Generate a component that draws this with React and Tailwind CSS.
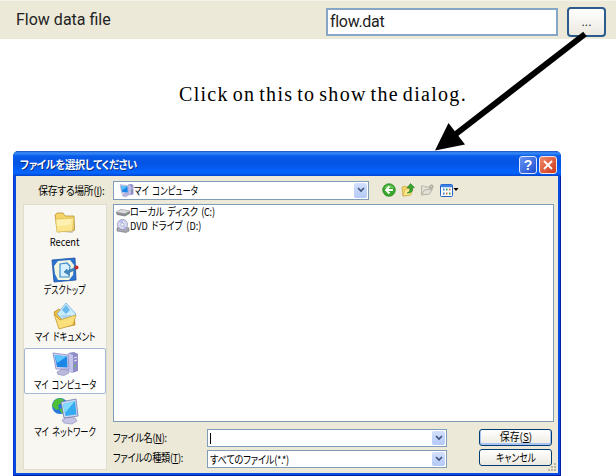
import React from "react";

const ui = "font-['Liberation_Sans','Noto_Sans_CJK_JP',sans-serif]";
const jp = "font-['Noto_Sans_CJK_JP',sans-serif] [font-feature-settings:'palt'] whitespace-nowrap";
const narrow = "inline-block origin-left text-[11px] ";

function Monitor({ className }) {
  return (
    <svg viewBox="0 0 28 28" className={className}>
      <path d="M17 3l6-1 4 2v17l-6 2-5-3z" fill="#8f8cc8" />
      <path d="M17 3l5 2v18l-6-3z" fill="#c4c3ea" />
      <path d="M23 8l3-1M23 11l3-1" stroke="#e9e9fb" />
      <circle cx="24" cy="16" r="1" fill="#5cc24a" />
      <path d="M6 22l5-3 6 1 1 3-5 2.500-6-1z" fill="#b9b8dc" stroke="#8987b8" strokeWidth=".6" />
      <path d="M2 3l15 2 1 14-13 0z" fill="#d4d5f2" stroke="#8785c0" strokeWidth=".8" />
      <path d="M3.500 5l12.500 1.500.5 11L6 17z" fill="#1c86e6" />
      <path d="M3.500 5l12.500 1.500L6 13z" fill="#5cc4fa" />
    </svg>
  );
}

function Folder() {
  return (
    <svg viewBox="0 0 24 24" className="h-6 w-6">
      <path d="M3 20l16 2 3-3V8l-2 12z" fill="#a7a28f" opacity=".6" />
      <path d="M2 4l2-2 6 0 2 3 9 0 .5 14-17 2z" fill="#f5d568" stroke="#b8933a" strokeWidth=".8" />
      <path d="M2.500 8l18.500-1-1.500 13-15.500 1z" fill="#fbe68e" stroke="#d7b650" strokeWidth=".6" />
      <path d="M4 9l15-1-2 6-13 1z" fill="#fff5bd" opacity=".7" />
    </svg>
  );
}

function DesktopIcon() {
  return (
    <svg viewBox="0 0 28 26" className="h-[26px] w-7">
      <path d="M1 3l23-2 1 22-22 2z" fill="#2c72cf" stroke="#1a50a4" strokeWidth=".8" />
      <path d="M3 9l4-5 12-1 4 5-1 10-4 5-11 0-3-6z" fill="#f4f7df" />
      <path d="M9 7l7-1 3 3-1 11-9 0z" fill="#d7f0ff" stroke="#3b8ad0" strokeWidth="1.200" />
      <path d="M13 15l3-3 0 2 7-3 1 2-7 3 1 2z" fill="#3d8ac2" stroke="#245e96" strokeWidth=".5" />
      <circle cx="25.500" cy="10.500" r="2" fill="#c32b25" />
    </svg>
  );
}

function DocumentsIcon() {
  return (
    <svg viewBox="0 0 26 28" className="h-7 w-[26px]">
      <path d="M2 10l5-3 3 2 12 2 1 12-16 3z" fill="#edbd43" stroke="#b98720" strokeWidth=".7" />
      <path d="M5 12L14 1l10 11-9 10z" fill="#c9ecff" stroke="#79afd3" strokeWidth=".8" />
      <path d="M10 8l4-5 4 5-4 4z" fill="#6cb9ee" />
      <path d="M9 14h10M11 16h7" stroke="#8bbde0" />
      <path d="M2 12l6 6 3-1 13-4-3 10-14 4z" fill="#fbdf7b" stroke="#c1942e" strokeWidth=".7" />
    </svg>
  );
}

function NetworkIcon() {
  return (
    <svg viewBox="0 0 28 28" className="h-7 w-7">
      <circle cx="9" cy="9" r="8" fill="#2678d8" />
      <path d="M3 4c4-4 8-3 10-1l-3 4-3 1 1 4-3 1-4-4zM8 12l4-1 2 4-3 2z" fill="#4fbf38" />
      <path d="M11 23l5-3 8 1 2 3-5 3-8-1z" fill="#c6c4e4" stroke="#8986b7" strokeWidth=".6" />
      <path d="M10 5l15-3 2 17-14 2z" fill="#d2d8f0" stroke="#6f7bb1" strokeWidth=".8" />
      <path d="M12 7l12-3 1.500 13.500-11 1.500z" fill="#35aaf0" />
      <path d="M12 7l12-3-10 12z" fill="#83dbfc" />
    </svg>
  );
}

function Arrow() {
  return (
    <svg viewBox="0 0 616 476" className="pointer-events-none absolute left-0 top-0 h-[476px] w-[616px]">
      <path d="M585 34L452 137" stroke="#000" strokeWidth="6" />
      <path d="M435 150.500L448.500 123 465 144.500z" />
    </svg>
  );
}

function DropButton() {
  return (
    <span className="flex h-full w-[13px] items-center justify-center rounded-[2px] bg-gradient-to-b from-[#d3e0fd] to-[#b4c9f8]">
      <svg viewBox="0 0 8 6" className="h-[6px] w-2">
        <path d="M1 1l3 3 3-3" fill="none" stroke="#42557c" strokeWidth="1.700" />
      </svg>
    </span>
  );
}

function Place({ icon, label, scale, selected }) {
  return (
    <div className={"flex h-[46px] w-[82px] flex-col items-center justify-end rounded-[2px] border " + (selected ? "border-[#a3b9d4] bg-white" : "border-transparent")}>
      {icon}
      <span className={jp + " -mt-px mb-px inline-block text-[11px] leading-[15px] text-black " + scale}>{label}</span>
    </div>
  );
}

function Toolbar() {
  return (
    <div className="ml-[13px] flex items-center">
      <svg viewBox="0 0 14 14" className="h-[14px] w-[14px]">
        <circle cx="7" cy="7" r="6.300" fill="#38a72c" stroke="#23821f" strokeWidth=".7" />
        <path d="M2 5a5.500 5 0 0 1 10 0z" fill="#8bdb77" opacity=".6" />
        <path d="M7.500 3.500L4 7l3.500 3.500M4 7h7" fill="none" stroke="#fff" strokeWidth="1.800" />
      </svg>
      <svg viewBox="0 0 14 14" className="ml-[5px] h-[14px] w-[14px]">
        <path d="M1 4l3-1 1 1 5-1-1 9-7 1z" fill="#f6d667" stroke="#bd942e" strokeWidth=".6" />
        <path d="M2 13l2-7 8-1-2 7z" fill="#fce98f" stroke="#c69f3d" strokeWidth=".6" />
        <path d="M6 10c3-1 3-3 2.500-5H6L9.500.5 13.500 4.500h-2c1 4-2 6-5.500 5.500z" fill="#37a52e" stroke="#1e7420" strokeWidth=".5" />
      </svg>
      <svg viewBox="0 0 14 12" className="ml-[5px] h-3 w-[14px]">
        <path d="M1.500 2h3l1 1h4v2l3 0-3 5-8 1z" fill="#e3e1d5" stroke="#b5b3a6" />
        <path d="M1.500 11l3-5 8-1" fill="none" stroke="#b5b3a6" />
        <circle cx="11.500" cy="2.500" r="1.500" fill="#d5d3c7" stroke="#9a988e" />
      </svg>
      <svg viewBox="0 0 19 13" className="ml-[6px] h-[13px] w-[19px]">
        <rect x=".5" y=".5" width="12" height="12" rx="1" fill="#fff" stroke="#2862c4" />
        <path d="M1 2h11" stroke="#3d83e8" strokeWidth="2.500" />
        <path d="M3 5.500h1.500M3 9.500h1.500" stroke="#3e75c5" strokeWidth="2" />
        <path d="M6 5.500h1.500M9 9.500h1.500" stroke="#3b9a58" strokeWidth="2" />
        <path d="M9 5.500h1.500M6 9.500h1.500" stroke="#c77345" strokeWidth="2" />
        <path d="M13.500 4h5L16 7z" fill="#000" />
      </svg>
    </div>
  );
}

function TitleBar() {
  return (
    <div className="flex h-[25px] shrink-0 items-center rounded-t-[5px] bg-[linear-gradient(#1a4fc4_0,#3a8df8_2px,#0a5cea_5px,#0453e3_12px,#0562fb_20px,#0364fc_22px,#0144cf_25px)] pl-[7px] pr-1">
      <span className={jp + " inline-block origin-left scale-x-[0.94] pt-px text-[11px] font-bold leading-4 tracking-[-0.4px] text-white [text-shadow:1px_1px_0_#0a2f80]"}>ファイルを選択してください</span>
      <div className="ml-auto flex gap-[2px] pt-[2px]">
        <button className="flex h-[18px] w-[18px] items-center justify-center rounded-[3px] border border-[#e0e8ff] bg-gradient-to-br from-[#6a92f2] to-[#1e4cd2] text-[14px] font-bold leading-none text-white">?</button>
        <button className="flex h-[18px] w-[18px] items-center justify-center rounded-[3px] border border-[#f4e4e4] bg-gradient-to-br from-[#f08a6a] to-[#cb3312]">
          <svg viewBox="0 0 10 10" className="h-[10px] w-[10px]"><path d="M1 1l8 8M9 1L1 9" stroke="#fff" strokeWidth="1.800" /></svg>
        </button>
      </div>
    </div>
  );
}

function Files() {
  return (
    <div className="h-[218px] w-[441px] border border-[#7f9db9] bg-white pl-[2px] text-black">
      <div className="flex h-[14px] items-center">
        <svg viewBox="0 0 14 9" className="h-[9px] w-[14px]">
          <path d="M.5 4L5 1.500 13.500 3v2.500L9 8 1 6.500z" fill="#8e8e94" stroke="#66666d" strokeWidth=".6" />
          <path d="M.5 4L5 1.500 13.500 3 9 5.500z" fill="#dadade" />
          <circle cx="11" cy="5.700" r=".7" fill="#64bb4f" />
        </svg>
        <span className={narrow + jp + " -mt-[3px] scale-x-[0.83] leading-[14px] tracking-[-0.3px] [word-spacing:2px]"}>ローカル ディスク (C:)</span>
      </div>
      <div className="flex h-[14px] items-center">
        <svg viewBox="0 0 14 14" className="h-[14px] w-[14px]">
          <path d="M1 9l3-2 9 2v3l-3 1.500L1 12z" fill="#a7a7b0" stroke="#74747e" strokeWidth=".6" />
          <circle cx="6.500" cy="5.500" r="5" fill="#d9dcf0" stroke="#8e91b1" strokeWidth=".8" />
          <path d="M6.500 5.500L3 2a5 5 0 0 1 4-1zM6.500 5.500l4 3a5 5 0 0 1-2 1.500z" fill="#b7bbf1" />
          <circle cx="6.500" cy="5.500" r="1.500" fill="#fff" stroke="#8b8fb0" strokeWidth=".6" />
        </svg>
        <span className={narrow + jp + " -mt-[2px] scale-x-[0.83] leading-[14px] [word-spacing:2px]"}>DVD ドライブ (D:)</span>
      </div>
    </div>
  );
}

function Grip() {
  return (
    <svg viewBox="0 0 9 9" className="absolute bottom-px right-px h-[9px] w-[9px]">
      <path d="M6 0h2v2H6zM6 3h2v2H6zM3 3h2v2H3zM6 6h2v2H6zM3 6h2v2H3zM0 6h2v2H0z" fill="#b8b4a2" />
    </svg>
  );
}

const action = "flex w-[73px] items-center justify-center rounded-[3px] border border-[#003c74] bg-gradient-to-b from-white to-[#ece9df] text-[11px] leading-none text-black ";

function Dialog() {
  return (
    <div className="ml-[13px] flex h-[325px] w-[548px] flex-col rounded-t-[6px] bg-[#0a4be0] shadow-[inset_-1px_-1px_0_#0022a8,inset_1px_0_0_#0a36d0]">
      <TitleBar />
      <div className="relative mx-[3px] mb-[3px] flex flex-1 flex-col bg-[#ece9d8] pl-[7px] text-black">
        <div className="flex h-[28px] items-center">
          <div className="flex w-[82px] justify-end">
            <span className={jp + " inline-block origin-right scale-x-[0.89] text-[11px] leading-4 tracking-[-0.3px]"}>保存する場所(<u>I</u>):</span>
          </div>
          <div className="ml-[8px] flex h-[19px] w-[256px] items-center border border-[#7f9db9] bg-white p-px pl-[5px]">
            <Monitor className="h-[15px] w-[15px]" />
            <span className={narrow + jp + " scale-x-[0.76] leading-4 [word-spacing:2px]"}>マイ コンピュータ</span>
            <span className="flex-1" />
            <DropButton />
          </div>
          <Toolbar />
        </div>
        <div className="flex">
          <div className="flex h-[266px] w-[84px] flex-col items-center gap-[1.5px] border border-[#e0ddce] bg-[#f8f7f2]">
            <Place icon={<Folder />} label="Recent" scale="scale-x-[0.84]" />
            <Place icon={<DesktopIcon />} label="デスクトップ" scale="scale-x-[0.73]" />
            <Place icon={<DocumentsIcon />} label="マイ ドキュメント" scale="scale-x-[0.76] [word-spacing:2px]" />
            <Place icon={<Monitor className="h-7 w-7" />} label="マイ コンピュータ" scale="scale-x-[0.74] [word-spacing:2px]" selected />
            <Place icon={<NetworkIcon />} label="マイ ネットワーク" scale="scale-x-[0.75] [word-spacing:2px]" />
          </div>
          <div className="ml-[6px] flex flex-1 flex-col">
            <Files />
            <div className="mt-[7px] flex h-[17px] items-start">
              <div className="flex w-[94px]">
                <span className={narrow + jp + " scale-x-[0.83] leading-4 tracking-[-0.3px]"}>ファイル名(<u>N</u>):</span>
              </div>
              <div className="flex h-[18px] w-[240px] items-center border border-[#7f9db9] bg-white p-px pl-[2px]">
                <span className="h-[11px] w-px bg-black" />
                <span className="flex-1" />
                <DropButton />
              </div>
              <button className={action + jp + " ml-[32px] h-[17px] pb-[2px] shadow-[inset_0_-1px_0_1px_#a9c3f3]"}>
                <span className="inline-block scale-x-[0.9]">保存(<u>S</u>)</span>
              </button>
            </div>
            <div className="mt-[3px] flex h-[18px] items-start">
              <div className="flex w-[94px]">
                <span className={narrow + jp + " scale-x-[0.83] leading-4 tracking-[-0.3px]"}>ファイルの種類(<u>T</u>):</span>
              </div>
              <div className="mt-px flex h-[18px] w-[240px] items-center border border-[#7f9db9] bg-white p-px pl-[2px]">
                <span className={narrow + jp + " scale-x-[0.84] leading-4 tracking-[-0.3px]"}>すべてのファイル(*.*)</span>
                <span className="flex-1" />
                <DropButton />
              </div>
              <button className={action + jp + " ml-[32px] h-[17px] pb-px"}>
                <span className="inline-block scale-x-[0.8]">キャンセル</span>
              </button>
            </div>
          </div>
        </div>
        <Grip />
      </div>
    </div>
  );
}

export default function App() {
  return (
    <div className={"relative flex h-[476px] w-[616px] flex-col overflow-hidden bg-white " + ui}>
      <div className="flex h-[39px] shrink-0 items-center border-t border-[#f4f3ea] bg-[#ece9d8] pl-4 text-[#222]">
        <span className="w-[310px] font-[Roboto,sans-serif] text-[16px]">Flow data file</span>
        <div className="mt-[3px] flex h-[28px] w-[232px] items-center border-2 border-[#86a6c6] bg-white pl-[2px] font-[Roboto,sans-serif] text-[16px] tracking-[-0.3px]">flow.dat</div>
        <button className="ml-[9px] mt-[4px] flex h-[30px] w-[39px] items-center justify-center rounded-[4px] border-2 border-[#2a5b8c] bg-gradient-to-b from-white to-[#ebe9df] text-[12px]">...</button>
      </div>
      <p className="ml-[179px] mt-[41px] h-[71px] shrink-0 whitespace-nowrap font-['Liberation_Serif',serif] text-[20px] leading-[28px] tracking-[1.3px] text-black [word-spacing:-2.4px]">Click on this to show the dialog.</p>
      <Dialog />
      <Arrow />
    </div>
  );
}
